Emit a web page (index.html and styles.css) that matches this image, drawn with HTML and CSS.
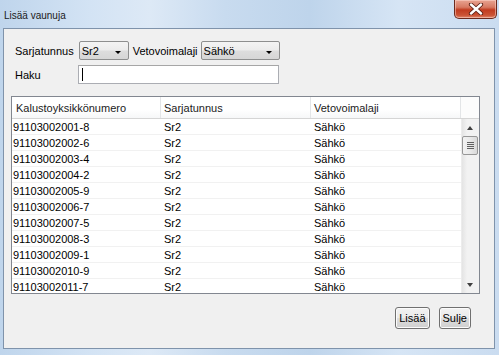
FILE: index.html
```html
<!DOCTYPE html>
<html lang="fi">
<head>
    <meta charset="UTF-8">
    <title>Lisää vaunuja</title>
    <link rel="stylesheet" href="styles.css">
</head>
<body>
    <div class="window">
        <!-- Title bar -->
        <div class="titlebar">
            <span class="title">Lisää vaunuja</span>
            <div class="close-button">
                <svg width="16" height="12" viewBox="0 0 16 12">
                    <path d="M3 1.5 L13 10.5 M13 1.5 L3 10.5" stroke="#5a1f14" stroke-width="4.2" stroke-linecap="round"/>
                    <path d="M3 1.5 L13 10.5 M13 1.5 L3 10.5" stroke="#ffffff" stroke-width="2.4" stroke-linecap="round"/>
                </svg>
            </div>
        </div>

        <div class="client">
            <!-- Filters -->
            <div class="filters">
                <div class="frow">
                    <span class="label">Sarjatunnus</span>
                    <div class="combo combo-sr">Sr2<span class="arrow"></span></div>
                    <span class="label label-veto">Vetovoimalaji</span>
                    <div class="combo combo-veto">Sähkö<span class="arrow"></span></div>
                </div>
                <div class="frow">
                    <span class="label label-haku">Haku</span>
                    <div class="textbox"><span class="caret"></span></div>
                </div>
            </div>

            <!-- Table -->
            <div class="grid">
                <div class="grid-head">
                    <div class="hcell">Kalustoyksikkönumero</div>
                    <div class="hcell">Sarjatunnus</div>
                    <div class="hcell">Vetovoimalaji</div>
                    <div class="hfill"></div>
                </div>
                <div class="grid-main">
                    <div class="rows">
                        <div class="row"><span>91103002001-8</span><span>Sr2</span><span>Sähkö</span></div>
                        <div class="row"><span>91103002002-6</span><span>Sr2</span><span>Sähkö</span></div>
                        <div class="row"><span>91103002003-4</span><span>Sr2</span><span>Sähkö</span></div>
                        <div class="row"><span>91103002004-2</span><span>Sr2</span><span>Sähkö</span></div>
                        <div class="row"><span>91103002005-9</span><span>Sr2</span><span>Sähkö</span></div>
                        <div class="row"><span>91103002006-7</span><span>Sr2</span><span>Sähkö</span></div>
                        <div class="row"><span>91103002007-5</span><span>Sr2</span><span>Sähkö</span></div>
                        <div class="row"><span>91103002008-3</span><span>Sr2</span><span>Sähkö</span></div>
                        <div class="row"><span>91103002009-1</span><span>Sr2</span><span>Sähkö</span></div>
                        <div class="row"><span>91103002010-9</span><span>Sr2</span><span>Sähkö</span></div>
                        <div class="row"><span>91103002011-7</span><span>Sr2</span><span>Sähkö</span></div>
                    </div>
                    <!-- Vertical scrollbar -->
                    <div class="vscroll">
                        <div class="sarrow sarrow-up"></div>
                        <div class="thumb">
                            <span></span><span></span><span></span><span></span>
                        </div>
                        <div class="track"></div>
                        <div class="sarrow sarrow-down"></div>
                    </div>
                </div>
            </div>

            <!-- Buttons -->
            <div class="buttons">
                <div class="btn">Lisää</div>
                <div class="btn">Sulje</div>
            </div>
        </div>
    </div>
</body>
</html>
```

FILE: styles.css
```css
body {
    margin: 0;
    font-family: "Liberation Sans", Arial, sans-serif;
    font-size: 11px;
    color: #000;
    background: #fff;
}

.window {
    width: 499px;
    height: 355px;
    box-sizing: border-box;
    padding: 0 4px 6px 3px;
    display: flex;
    flex-direction: column;
    background: linear-gradient(90deg, #bfd5ec 0%, #d3e3f4 18%, #dde9f6 30%, #c8dbef 45%, #bed4eb 62%, #d6e5f5 80%, #cadcf0 100%);
}

/* Title bar */
.titlebar {
    height: 28px;
    display: flex;
    align-items: flex-start;
    justify-content: space-between;
    flex-shrink: 0;
}

.title {
    margin-top: 10px;
    margin-left: 1px;
    font-size: 10px;
    color: #1a1a1a;
}

.close-button {
    width: 43px;
    height: 19px;
    box-sizing: border-box;
    margin-right: -2px;
    border: 1px solid #6b2a1e;
    border-top: none;
    border-radius: 0 0 5px 5px;
    background: linear-gradient(180deg, #e8a492 0%, #d77a63 40%, #c13c20 55%, #cb5436 85%, #e08a70 100%);
    display: flex;
    align-items: center;
    justify-content: center;
    box-shadow: inset 0 0 0 1px rgba(255, 220, 210, 0.5);
}

/* Client area */
.client {
    flex: 1;
    background: #f0f0f0;
    border: 1px solid #7f93ab;
    padding: 12px 15px 0 7px;
    display: flex;
    flex-direction: column;
}

.filters {
    padding-left: 4px;
}

.frow {
    display: flex;
    align-items: center;
    height: 19px;
    margin-bottom: 5px;
}

.label {
    margin-right: 5px;
}

.label-veto {
    margin-left: 4px;
    margin-right: 3px;
}

.label-haku {
    width: 63px;
    margin-right: 0;
}

.combo {
    position: relative;
    height: 19px;
    box-sizing: border-box;
    border: 1px solid #8e8f8f;
    border-radius: 2px;
    background: linear-gradient(180deg, #f4f4f4 0%, #ececec 48%, #dddddd 52%, #d6d6d6 100%);
    padding: 3px 0 0 2px;
}

.combo-sr {
    width: 50px;
}

.combo-veto {
    width: 79px;
}

.arrow {
    position: absolute;
    right: 7px;
    top: 9px;
    width: 0;
    height: 0;
    border-left: 3.5px solid transparent;
    border-right: 3.5px solid transparent;
    border-top: 3.5px solid #000;
}

.textbox {
    width: 201px;
    height: 19px;
    box-sizing: border-box;
    border: 1px solid #abadb3;
    border-top-color: #a6a6a6;
    background: #fff;
    padding: 2px 0 0 3px;
}

.caret {
    display: block;
    width: 1px;
    height: 13px;
    background: #000;
}

/* Table */
.grid {
    margin-top: 7px;
    width: 469px;
    height: 198px;
    box-sizing: border-box;
    border: 1px solid #828790;
    background: #fff;
    display: flex;
    flex-direction: column;
    overflow: hidden;
}

.grid-head {
    display: flex;
    height: 21px;
    flex-shrink: 0;
    border-bottom: 1px solid #d5d5d5;
    background: linear-gradient(180deg, #ffffff 0%, #ffffff 60%, #f6f7f8 100%);
}

.hcell {
    width: 150px;
    box-sizing: border-box;
    padding: 5px 0 0 3px;
    border-right: 1px solid #e3e5e7;
    color: #1b1b1b;
}

.hcell:first-child {
    width: 149px;
    padding-left: 4px;
}

.hfill {
    flex: 1;
    background: #fcfcfc;
}

.grid-main {
    flex: 1;
    display: flex;
    min-height: 0;
}

.rows {
    flex: 1;
    overflow: hidden;
}

.row {
    display: flex;
    height: 16px;
    box-sizing: border-box;
    border-bottom: 1px solid #f1f1f1;
    line-height: 16px;
}

.row span {
    padding-left: 1px;
}

.row span:nth-child(1) {
    width: 150px;
}

.row span:nth-child(2) {
    width: 149px;
}

/* Scrollbar */
.vscroll {
    width: 17px;
    display: flex;
    flex-direction: column;
    background: linear-gradient(90deg, #e4e4e4 0%, #f2f2f2 30%, #f2f2f2 100%);
    border-left: 1px solid #ececec;
}

.sarrow {
    height: 17px;
    position: relative;
}

.sarrow::after {
    content: "";
    position: absolute;
    left: 5px;
    width: 0;
    height: 0;
    border-left: 3.5px solid transparent;
    border-right: 3.5px solid transparent;
}

.sarrow-up::after {
    top: 7px;
    border-bottom: 4px solid #404040;
}

.sarrow-down::after {
    top: 7px;
    border-top: 4px solid #404040;
}

.thumb {
    height: 19px;
    margin: 0 1px 0 0;
    box-sizing: border-box;
    border: 1px solid #979797;
    border-radius: 2px;
    background: linear-gradient(90deg, #f2f2f2 0%, #e9e9e9 50%, #d9d9d9 100%);
    display: flex;
    flex-direction: column;
    align-items: center;
    justify-content: center;
    gap: 1px;
}

.thumb span {
    width: 7px;
    height: 1px;
    background: #606060;
}

.track {
    flex: 1;
}

/* Buttons */
.buttons {
    display: flex;
    justify-content: flex-end;
    gap: 9px;
    margin-top: 13px;
    padding-right: 8px;
}

.btn {
    height: 22px;
    box-sizing: border-box;
    padding: 0 3px;
    border: 1px solid #707070;
    border-radius: 3px;
    background: linear-gradient(180deg, #f2f2f2 0%, #ebebeb 48%, #dddddd 52%, #cfcfcf 100%);
    box-shadow: inset 0 0 0 1px #fbfbfb;
    line-height: 20px;
}
```
